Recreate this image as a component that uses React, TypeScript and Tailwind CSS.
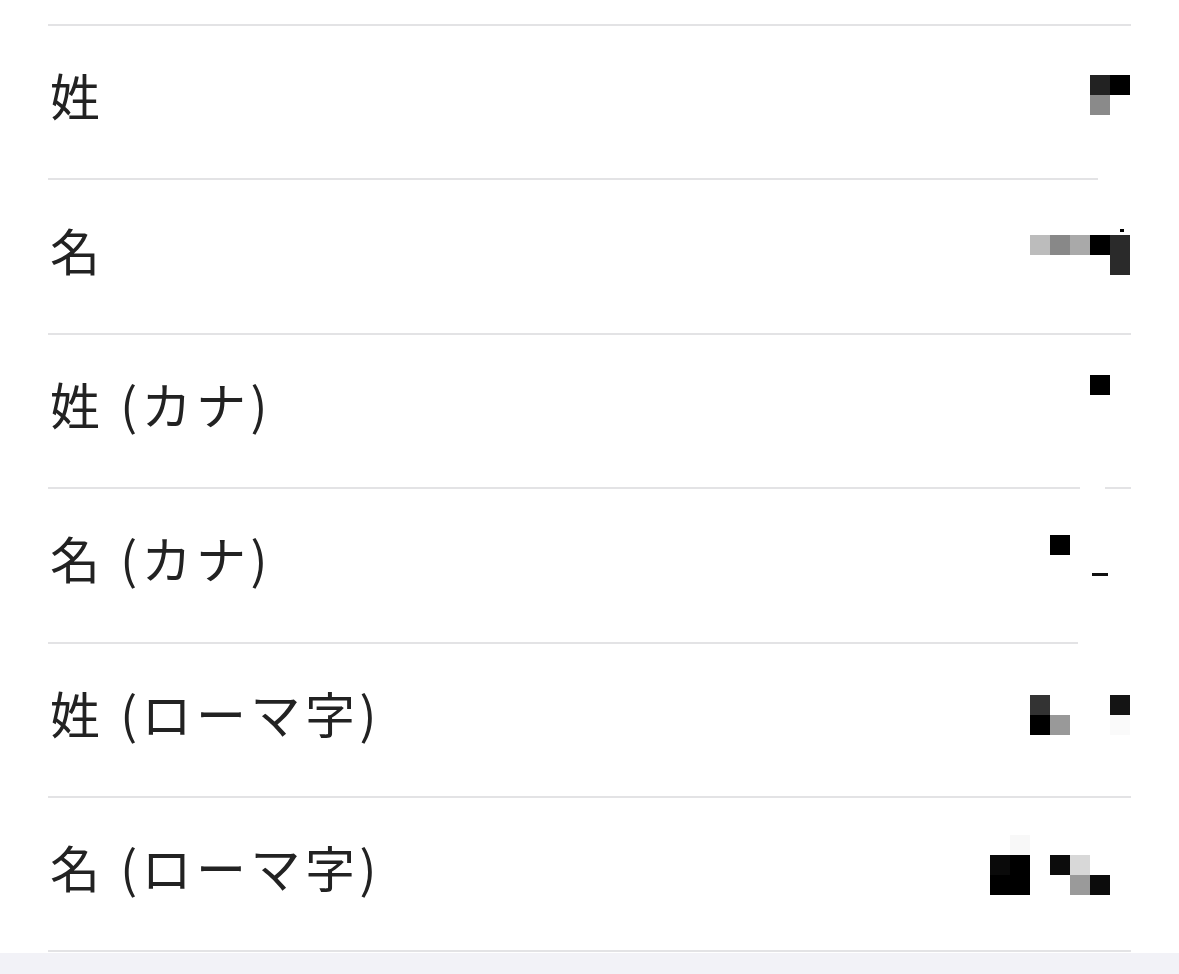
import React from "react";

type Cell = [number, number, string, number?, number?];

type Row = {
  label: string;
  line: [number, number][];
  cells: Cell[];
};

// x positions are page coords, y is offset from the row top
const ROWS: Row[] = [
  {
    label: "姓",
    line: [[48, 1131]],
    cells: [
      [1090, 51, "#222222"],
      [1110, 51, "#000000"],
      [1090, 71, "#8a8a8a"],
    ],
  },
  {
    label: "名",
    line: [[48, 1098]],
    cells: [
      [1030, 57, "#bcbcbc"],
      [1050, 57, "#888888"],
      [1070, 57, "#a9a9a9"],
      [1090, 57, "#000000"],
      [1110, 57, "#2a2a2a"],
      [1110, 77, "#2a2a2a"],
      [1120, 51, "#000000", 4, 3],
    ],
  },
  {
    label: "姓 (カナ)",
    line: [[48, 1131]],
    cells: [[1090, 42, "#000000"]],
  },
  {
    label: "名 (カナ)",
    line: [
      [48, 1080],
      [1105, 1131],
    ],
    cells: [
      [1050, 48, "#000000"],
      [1092, 86, "#111111", 16, 3],
    ],
  },
  {
    label: "姓 (ローマ字)",
    line: [[48, 1078]],
    cells: [
      [1030, 53, "#333333"],
      [1030, 73, "#000000"],
      [1050, 73, "#999999"],
      [1110, 53, "#141414"],
      [1110, 73, "#fafafa"],
    ],
  },
  {
    label: "名 (ローマ字)",
    line: [[48, 1131]],
    cells: [
      [1010, 39, "#f8f8f8"],
      [990, 59, "#0a0a0a"],
      [1010, 59, "#000000"],
      [990, 79, "#000000"],
      [1010, 79, "#000000"],
      [1050, 59, "#0c0c0c"],
      [1070, 59, "#d8d8d8"],
      [1070, 79, "#9a9a9a"],
      [1090, 79, "#0c0c0c"],
    ],
  },
];

function Divider({ segs }: { segs: [number, number][] }) {
  return (
    <div className="relative h-[2px] w-full">
      {segs.map(([a, b], i) => (
        <div
          key={i}
          className="absolute top-0 h-[2px] bg-[#e3e3e5]"
          style={{ left: a, width: b - a }}
        />
      ))}
    </div>
  );
}

function NameRow({ row }: { row: Row }) {
  return (
    <div className="relative h-[154.4px]">
      <Divider segs={row.line} />
      <div className="flex h-[152.4px] items-center pl-[50px] pb-[16px]">
        <span className="text-[50px] leading-none tracking-[4.5px] text-[#222222]">{row.label}</span>
      </div>
      {row.cells.map(([x, y, c, w, h], i) => (
        <div
          key={i}
          className="absolute"
          style={{ left: x, top: y, width: w ?? 20, height: h ?? 20, background: c }}
        />
      ))}
    </div>
  );
}

export default function App() {
  return (
    <div
      className="min-h-[974px] w-[1179px] overflow-hidden bg-[#f2f2f7]"
      style={{ fontFamily: '"Noto Sans CJK JP", "Noto Sans", sans-serif' }}
    >
      <div className="bg-white pt-[24px]">
        {ROWS.map((r) => (
          <NameRow key={r.label} row={r} />
        ))}
        <Divider segs={[[48, 1131]]} />
        <div className="h-[1px]" />
      </div>
    </div>
  );
}
